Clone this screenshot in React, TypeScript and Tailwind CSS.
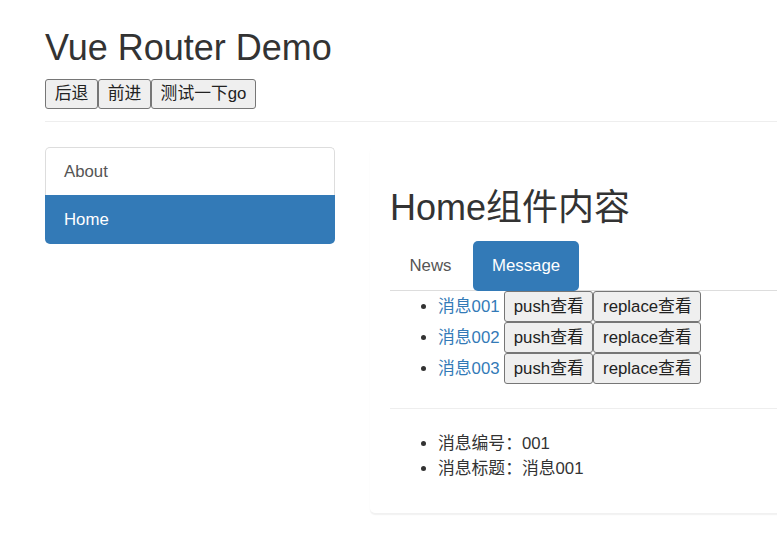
import React from "react";

const messages = [
  { id: "001", title: "消息001" },
  { id: "002", title: "消息002" },
  { id: "003", title: "消息003" },
];

function Btn({ children, h = "h-[30px]" }: { children: React.ReactNode; h?: string }) {
  return (
    <button className={`${h} px-[8.7px] bg-[#efefef] border border-[#767676] rounded-[3px] text-[#222] leading-[24px]`}>
      {children}
    </button>
  );
}

function Bullet() {
  return <span className="ml-[30.5px] mr-[12.5px] w-[5px] h-[5px] rounded-full bg-[#333] shrink-0" />;
}

export default function App() {
  return (
    <div className="w-full h-[538px] overflow-hidden bg-white pl-[45px] pt-[27px] font-['Liberation_Sans','Noto_Sans_CJK_SC',sans-serif] text-[16.8px] leading-[24px] text-[#333]">
      <div>
        <h2 className="text-[36px] leading-[41px] font-normal">Vue Router Demo</h2>
        <div className="mt-[11px] flex">
          <Btn>后退</Btn>
          <Btn>前进</Btn>
          <Btn>测试一下go</Btn>
        </div>
        <div className="mt-[12px] h-px w-[760px] bg-[#eee]" />
      </div>

      <div className="mt-[25px] flex items-start">
        <div className="w-[290px] shrink-0">
          <a className="flex items-center h-[48px] pl-[18px] border border-b-0 border-[#ddd] rounded-t-[5px] text-[#555]">
            About
          </a>
          <a className="flex items-center h-[49px] pl-[19px] bg-[#337ab7] rounded-b-[5px] text-white">
            Home
          </a>
        </div>

        <div className="ml-[35px] w-[500px] shrink-0 border border-transparent rounded-[5px] shadow-[0_1.2px_1.2px_rgba(0,0,0,0.06)] pl-[19px] pt-[39px] pb-[31px]">
          <h2 className="text-[36px] leading-[41px] font-normal">Home组件内容</h2>
          <ul className="mt-[13px] flex border-b border-[#ddd]">
            <li className="-mb-px">
              <a className="flex items-center h-[50px] px-[19.5px] text-[#555]">News</a>
            </li>
            <li className="-mb-px ml-[2px]">
              <a className="flex items-center h-[50px] px-[19px] bg-[#337ab7] rounded-[5px] text-white">
                Message
              </a>
            </li>
          </ul>

          <ul>
            {messages.map((m) => (
              <li key={m.id} className="flex items-center h-[31px]">
                <Bullet />
                <a className="text-[#337ab7] mr-[4.5px]">{m.title}</a>
                <Btn h="h-[31px]">push查看</Btn>
                <Btn h="h-[31px]">replace查看</Btn>
              </li>
            ))}
          </ul>

          <div className="mt-[24px] h-px bg-[#eee]" />

          <ul className="mt-[22px]">
            <li className="flex items-center h-[25px]">
              <Bullet />
              <span>消息编号：001</span>
            </li>
            <li className="flex items-center h-[25px]">
              <Bullet />
              <span>消息标题：消息001</span>
            </li>
          </ul>
        </div>
      </div>
    </div>
  );
}
